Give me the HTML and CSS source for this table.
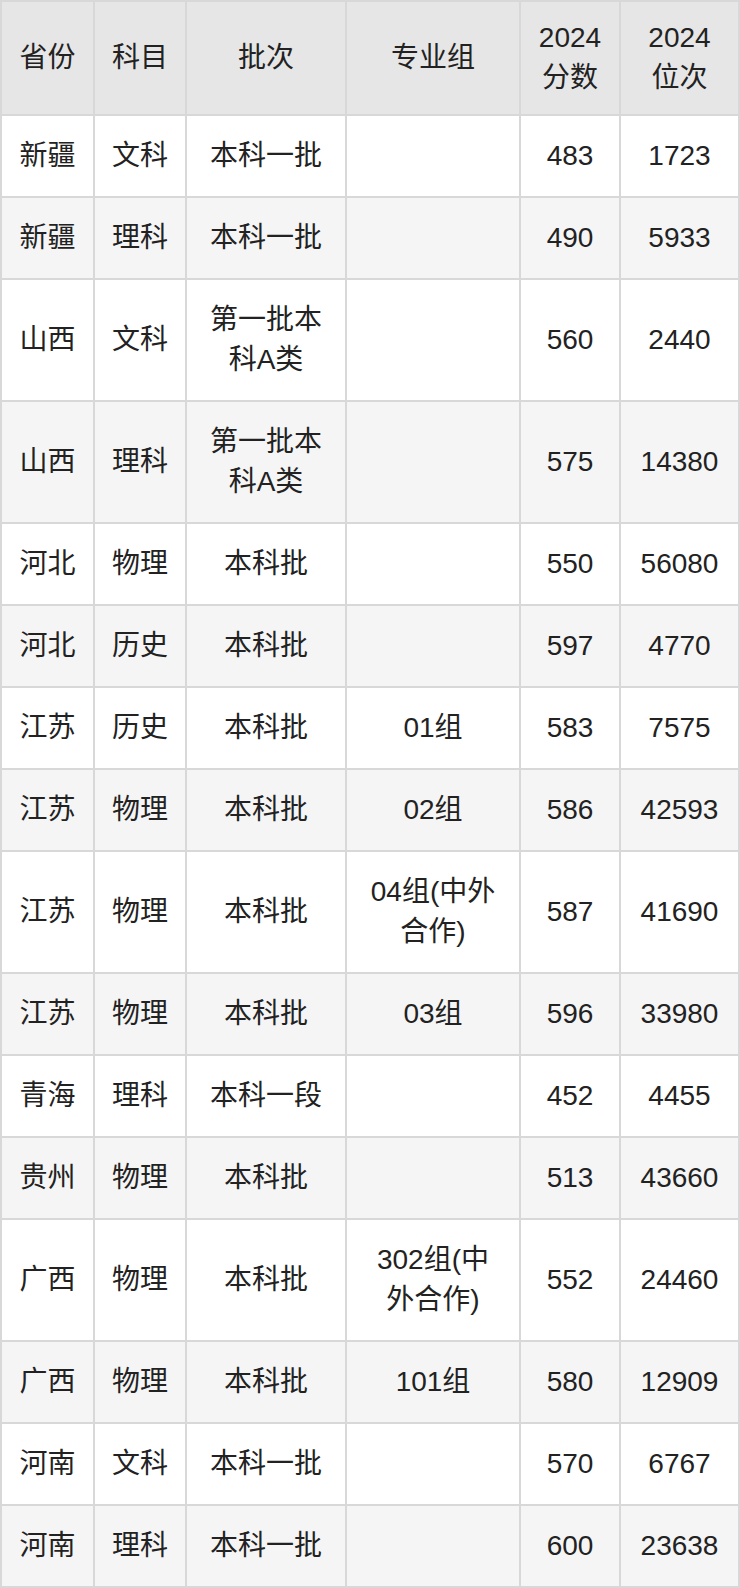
FILE: index.html
```html
<!DOCTYPE html>
<html lang="zh">
<head>
<meta charset="utf-8">
<link rel="stylesheet" href="styles.css">
</head>
<body>
<table class="score-table">
  <colgroup>
    <col class="c1"><col class="c2"><col class="c3"><col class="c4"><col class="c5"><col class="c6">
  </colgroup>
  <thead>
    <tr><th>省份</th><th>科目</th><th>批次</th><th>专业组</th><th>2024<br>分数</th><th>2024<br>位次</th></tr>
  </thead>
  <tbody>
    <tr><td>新疆</td><td>文科</td><td>本科一批</td><td></td><td>483</td><td>1723</td></tr>
    <tr><td>新疆</td><td>理科</td><td>本科一批</td><td></td><td>490</td><td>5933</td></tr>
    <tr><td>山西</td><td>文科</td><td>第一批本<br>科A类</td><td></td><td>560</td><td>2440</td></tr>
    <tr><td>山西</td><td>理科</td><td>第一批本<br>科A类</td><td></td><td>575</td><td>14380</td></tr>
    <tr><td>河北</td><td>物理</td><td>本科批</td><td></td><td>550</td><td>56080</td></tr>
    <tr><td>河北</td><td>历史</td><td>本科批</td><td></td><td>597</td><td>4770</td></tr>
    <tr><td>江苏</td><td>历史</td><td>本科批</td><td>01组</td><td>583</td><td>7575</td></tr>
    <tr><td>江苏</td><td>物理</td><td>本科批</td><td>02组</td><td>586</td><td>42593</td></tr>
    <tr><td>江苏</td><td>物理</td><td>本科批</td><td>04组(中外<br>合作)</td><td>587</td><td>41690</td></tr>
    <tr><td>江苏</td><td>物理</td><td>本科批</td><td>03组</td><td>596</td><td>33980</td></tr>
    <tr><td>青海</td><td>理科</td><td>本科一段</td><td></td><td>452</td><td>4455</td></tr>
    <tr><td>贵州</td><td>物理</td><td>本科批</td><td></td><td>513</td><td>43660</td></tr>
    <tr><td>广西</td><td>物理</td><td>本科批</td><td>302组(中<br>外合作)</td><td>552</td><td>24460</td></tr>
    <tr><td>广西</td><td>物理</td><td>本科批</td><td>101组</td><td>580</td><td>12909</td></tr>
    <tr><td>河南</td><td>文科</td><td>本科一批</td><td></td><td>570</td><td>6767</td></tr>
    <tr><td>河南</td><td>理科</td><td>本科一批</td><td></td><td>600</td><td>23638</td></tr>
  </tbody>
</table>
</body>
</html>
```

FILE: styles.css
```css
html, body {
  margin: 0;
  padding: 0;
  background: #ffffff;
}

.score-table {
  width: 740px;
  table-layout: fixed;
  border-collapse: collapse;
  font-family: "Liberation Sans", "Noto Sans CJK SC", sans-serif;
  font-size: 28px;
  color: #222222;
}

.c1 { width: 93px; }
.c2 { width: 92px; }
.c3 { width: 160px; }
.c4 { width: 174px; }
.c5 { width: 100px; }
.c6 { width: 119px; }

.score-table th,
.score-table td {
  border: 2px solid #d8d8d8;
  text-align: center;
  vertical-align: middle;
  line-height: 40px;
  padding: 20px 0;
  font-weight: normal;
}

.score-table th {
  background: #e6e6e6;
  padding: 16px 0;
}

.score-table tbody tr:nth-child(even) td {
  background: #f5f5f5;
}
```
